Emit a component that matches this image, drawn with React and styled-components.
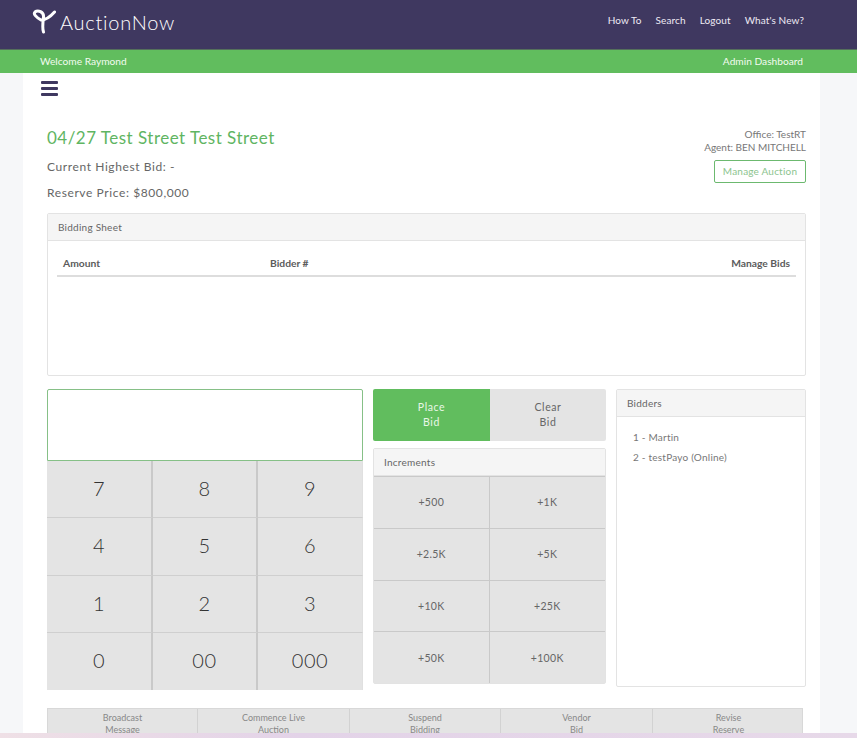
import styled, { createGlobalStyle } from "styled-components";

const GlobalStyle = createGlobalStyle`
  html, body {
    margin: 0;
    height: 738px;
    overflow: hidden;
    background: #f6f7f9;
    font-family: "Lato", "Open Sans", sans-serif;
    color: #555;
  }
  * { box-sizing: border-box; }
`;

const Page = styled.div`
  position: relative;
  width: 857px;
  height: 738px;
  overflow: hidden;
`;

const TopBar = styled.header`
  height: 50px;
  background: #3f3860;
  border-bottom: 1px solid #55705c;
  display: flex;
  align-items: center;
  justify-content: space-between;
  padding: 0 53px 6px 32px;
`;

const Brand = styled.div`
  display: flex;
  align-items: center;
  gap: 4px;
  color: #fff;
  font-size: 20px;
  font-weight: 300;
  letter-spacing: 0.75px;
`;

const Nav = styled.nav`
  display: flex;
  gap: 14px;
  margin-bottom: 4px;
`;

const NavLink = styled.a`
  color: #eeeaf4;
  font-size: 10px;
  letter-spacing: 0.1px;
`;

const WelcomeBar = styled.div`
  height: 23px;
  background: #61bd5e;
  color: #f2fbf0;
  font-size: 10.2px;
  display: flex;
  align-items: center;
  justify-content: space-between;
  padding: 0 54px 2px 40px;
`;

const Sheet = styled.main`
  width: 797px;
  height: 665px;
  margin-left: 23px;
  background: #fff;
  padding: 8px 14px 0 24px;
`;

const Burger = styled.div`
  width: 17px;
  height: 15px;
  margin-left: -6px;
  display: flex;
  flex-direction: column;
  justify-content: space-between;
  span {
    height: 3px;
    background: #3f3860;
    border-radius: 1px;
  }
`;

const Intro = styled.section`
  display: flex;
  justify-content: space-between;
  height: 117px;
  padding-top: 31px;
`;

const Title = styled.h1`
  margin: 0 0 10px;
  font-size: 17px;
  line-height: 22px;
  font-weight: 400;
  letter-spacing: 0.48px;
  color: #5fb562;
`;

const Stat = styled.p`
  margin: 0 0 10px;
  font-size: 12px;
  line-height: 16px;
  letter-spacing: 0.6px;
  color: #666;
`;

const Meta = styled.div`
  display: flex;
  flex-direction: column;
  align-items: flex-end;
  margin-top: 1px;
  font-size: 10px;
  line-height: 13px;
  color: #777;
`;

const ManageButton = styled.button`
  margin-top: 6px;
  width: 92px;
  height: 23px;
  padding: 0;
  background: #fff;
  border: 1px solid #6cb96f;
  border-radius: 2px;
  color: #8cc48e;
  font: inherit;
  font-size: 10px;
  letter-spacing: 0.2px;
`;

const Panel = styled.div`
  background: #fff;
  border: 1px solid #e3e3e3;
  border-radius: 2px;
  ${(p) => p.$height && `height: ${p.$height}px;`}
`;

const PanelHeading = styled.div`
  height: 27px;
  padding: 0 10px;
  display: flex;
  align-items: center;
  background: #f5f5f5;
  border-bottom: 1px solid #e3e3e3;
  font-size: 10px;
  letter-spacing: 0.25px;
  color: #666;
`;

const TableHead = styled.div`
  margin: 10px 9px 0;
  height: 26px;
  border-bottom: 2px solid #ddd;
  display: grid;
  grid-template-columns: 207px 1fr auto;
  align-items: center;
  padding: 0 6px;
  font-size: 10.3px;
  font-weight: 700;
  color: #5c5c5c;
`;

const BidArea = styled.section`
  display: grid;
  grid-template-columns: 316px 233px 190px;
  gap: 10px;
  margin-top: 13px;
  height: 301px;
  align-items: start;
`;

const Display = styled.div`
  height: 72px;
  border: 1px solid #86c087;
  border-radius: 2px 2px 0 0;
  background: #fff;
`;

const Keys = styled.div`
  display: grid;
  grid-template-columns: 106px 105px 105px;
  grid-auto-rows: 57.33px;
`;

const Key = styled.button`
  border: 0;
  border-right: 2px solid #c9c9c9;
  border-bottom: 1px solid #cfcfcf;
  background: #e4e4e4;
  padding: 0 0 2px;
  font: inherit;
  font-size: 20px;
  font-weight: 300;
  letter-spacing: 0.6px;
  color: #333;
  &:nth-child(3n) { border-right: 1px solid #e0e0e0; }
  &:nth-last-child(-n + 3) { border-bottom: 0; padding-bottom: 4px; }
`;

const Column = styled.div`
  display: flex;
  flex-direction: column;
  gap: 7px;
`;

const ActionPair = styled.div`
  display: grid;
  grid-template-columns: 117px 116px;
  height: 52px;
  border-radius: 2px;
  overflow: hidden;
`;

const Action = styled.button`
  border: 0;
  padding: 0;
  font: inherit;
  font-size: 10.5px;
  line-height: 15px;
  letter-spacing: 0.6px;
  background: ${(p) => (p.$primary ? "#61bd5e" : "#e4e4e4")};
  color: ${(p) => (p.$primary ? "#e9f7e7" : "#666")};
`;

const IncrementGrid = styled.div`
  display: grid;
  grid-template-columns: repeat(2, 1fr);
  grid-auto-rows: 51.75px;
`;

const Increment = styled.button`
  border: 0;
  border-right: 1px solid #c9c9c9;
  border-top: 1px solid #c9c9c9;
  background: #e4e4e4;
  padding: 0;
  font: inherit;
  font-size: 10.5px;
  letter-spacing: 0.3px;
  color: #666;
  &:nth-child(2n) { border-right: 0; }
`;

const BidderList = styled.ul`
  list-style: none;
  margin: 0;
  padding: 10px 16px;
  font-size: 10px;
  line-height: 20px;
  letter-spacing: 0.22px;
  color: #777;
`;

const Toolbar = styled.div`
  width: 756px;
  height: 32px;
  margin-top: 18px;
  display: grid;
  grid-template-columns: 150px 152px 151px 152px 151px;
  background: #e4e4e4;
  border: 1px solid #d8d8d8;
`;

const ToolButton = styled.button`
  border: 0;
  border-right: 1px solid #d2d2d2;
  background: transparent;
  padding: 0;
  font: inherit;
  font-size: 9px;
  line-height: 12px;
  color: #888;
  &:last-child { border-right: 0; }
`;

const FooterStrip = styled.div`
  position: absolute;
  left: 0;
  right: 0;
  bottom: 0;
  height: 5px;
  background: linear-gradient(90deg, #efe0e6, #e3d3e8 35%, #e7d9e9 100%);
`;

function Logo() {
  return (
    <svg width="24" height="25" viewBox="0 0 24 25" fill="none" stroke="#fff" strokeLinecap="round" strokeWidth="3">
      <path d="M11.500 23C10 19 11 13 11.500 8 12 3 6 .5 3 3 1 5 4 8 9 11 14 11 19 7 22.500 3" />
    </svg>
  );
}

const links = ["How To", "Search", "Logout", "What's New?"];
const keypad = ["7", "8", "9", "4", "5", "6", "1", "2", "3", "0", "00", "000"];
const increments = ["+500", "+1K", "+2.5K", "+5K", "+10K", "+25K", "+50K", "+100K"];
const tools = [
  ["Broadcast", "Message"],
  ["Commence Live", "Auction"],
  ["Suspend", "Bidding"],
  ["Vendor", "Bid"],
  ["Revise", "Reserve"],
];

export default function App() {
  return (
    <Page>
      <GlobalStyle />
      <TopBar>
        <Brand>
          <Logo />
          AuctionNow
        </Brand>
        <Nav>
          {links.map((l) => (
            <NavLink key={l}>{l}</NavLink>
          ))}
        </Nav>
      </TopBar>
      <WelcomeBar>
        <span>Welcome Raymond</span>
        <span>Admin Dashboard</span>
      </WelcomeBar>
      <Sheet>
        <Burger>
          <span />
          <span />
          <span />
        </Burger>
        <Intro>
          <div>
            <Title>04/27 Test Street Test Street</Title>
            <Stat>Current Highest Bid: -</Stat>
            <Stat>Reserve Price: $800,000</Stat>
          </div>
          <Meta>
            <span>Office: TestRT</span>
            <span>Agent: BEN MITCHELL</span>
            <ManageButton>Manage Auction</ManageButton>
          </Meta>
        </Intro>
        <Panel $height={163}>
          <PanelHeading>Bidding Sheet</PanelHeading>
          <TableHead>
            <span>Amount</span>
            <span>Bidder #</span>
            <span>Manage Bids</span>
          </TableHead>
        </Panel>
        <BidArea>
          <div>
            <Display />
            <Keys>
              {keypad.map((k) => (
                <Key key={k}>{k}</Key>
              ))}
            </Keys>
          </div>
          <Column>
            <ActionPair>
              <Action $primary>
                Place
                <br />
                Bid
              </Action>
              <Action>
                Clear
                <br />
                Bid
              </Action>
            </ActionPair>
            <Panel>
              <PanelHeading>Increments</PanelHeading>
              <IncrementGrid>
                {increments.map((i) => (
                  <Increment key={i}>{i}</Increment>
                ))}
              </IncrementGrid>
            </Panel>
          </Column>
          <Panel $height={298}>
            <PanelHeading>Bidders</PanelHeading>
            <BidderList>
              <li>1 - Martin</li>
              <li>2 - testPayo (Online)</li>
            </BidderList>
          </Panel>
        </BidArea>
        <Toolbar>
          {tools.map(([a, b]) => (
            <ToolButton key={a}>
              {a}
              <br />
              {b}
            </ToolButton>
          ))}
        </Toolbar>
      </Sheet>
      <FooterStrip />
    </Page>
  );
}
